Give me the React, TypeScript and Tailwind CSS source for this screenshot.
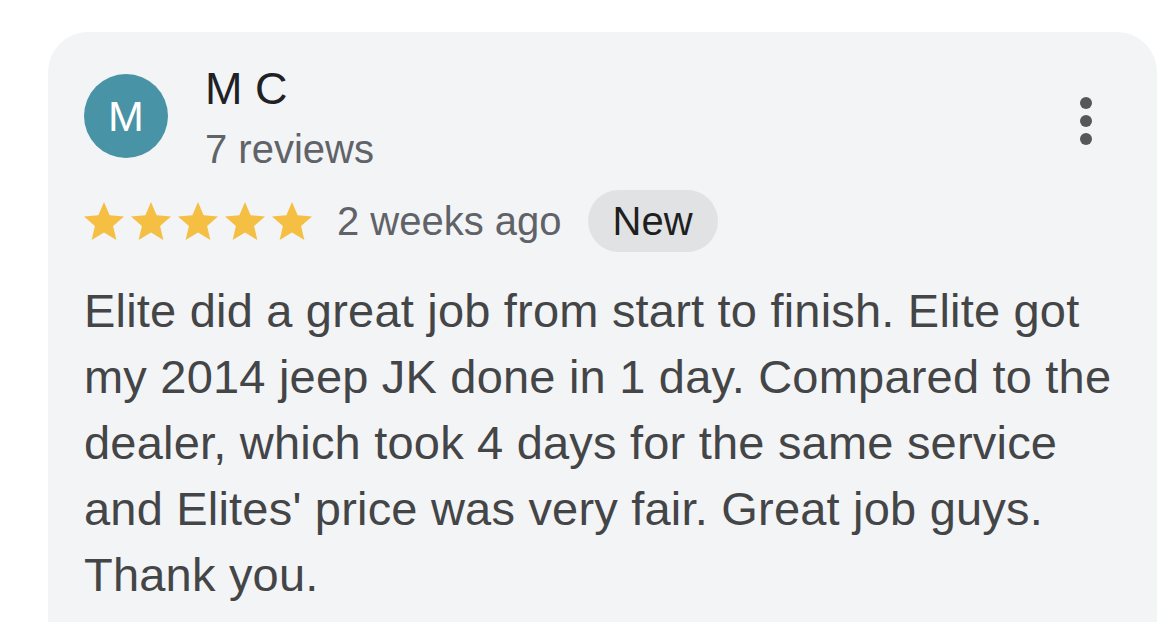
const STAR_PATH = 'M12 17.27L18.18 21l-1.64-7.03L22 9.24l-7.19-.61L12 2 9.19 8.63 2 9.24l5.46 4.73L5.82 21z'

function Star() {
  return (
    <svg viewBox="2 2 20 19" width={40} height={38} className="shrink-0">
      <path d={STAR_PATH} fill="#f4bf42" />
    </svg>
  )
}

function MoreButton() {
  // вертикальное меню «три точки»
  return (
    <button className="mt-[34px] mr-[32px] flex flex-col gap-[6px]" aria-label="More">
      <span className="block w-[12px] h-[12px] rounded-full bg-[#555759]" />
      <span className="block w-[12px] h-[12px] rounded-full bg-[#555759]" />
      <span className="block w-[12px] h-[12px] rounded-full bg-[#555759]" />
    </button>
  )
}

export default function App() {
  const text =
    "Elite did a great job from start to finish. Elite got my 2014 jeep JK done in 1 day. Compared to the dealer, which took 4 days for the same service and Elites' price was very fair. Great job guys. Thank you."

  return (
    <div className="w-[1164px] h-[622px] overflow-hidden bg-white pt-[32px] pl-[48px] font-['Liberation_Sans',Arial,sans-serif]">
      <div className="w-[1109px] h-[640px] bg-[#f3f4f6] rounded-t-[40px] pt-[31px] pl-[36px] pr-[33px]">
        <div className="flex items-start justify-between">
          <div className="flex items-start">
            <div className="mt-[11px] w-[84px] h-[84px] rounded-full bg-[#4893a5] flex items-center justify-center text-white text-[43px] leading-none">
              M
            </div>
            <div className="ml-[37px]">
              <div className="text-[45px] leading-[52px] text-[#202124]">M C</div>
              <div className="mt-[10px] text-[40px] leading-[48px] text-[#606368]">7 reviews</div>
            </div>
          </div>
          <MoreButton />
        </div>

        <div className="mt-[17px] flex items-center">
          <div className="flex gap-[7px]">
            {[0, 1, 2, 3, 4].map((i) => (
              <Star key={i} />
            ))}
          </div>
          <span className="ml-[25px] text-[40px] leading-[48px] text-[#5f6368]">2 weeks ago</span>
          <span className="ml-[26px] h-[62px] px-[25px] rounded-full bg-[#e1e2e4] flex items-center text-[40px] leading-none text-[#1f1f1f] font-medium">
            New
          </span>
        </div>

        <p className="mt-[26px] text-[47px] leading-[66px] tracking-[0.2px] text-[#444547]">{text}</p>
      </div>
    </div>
  )
}
